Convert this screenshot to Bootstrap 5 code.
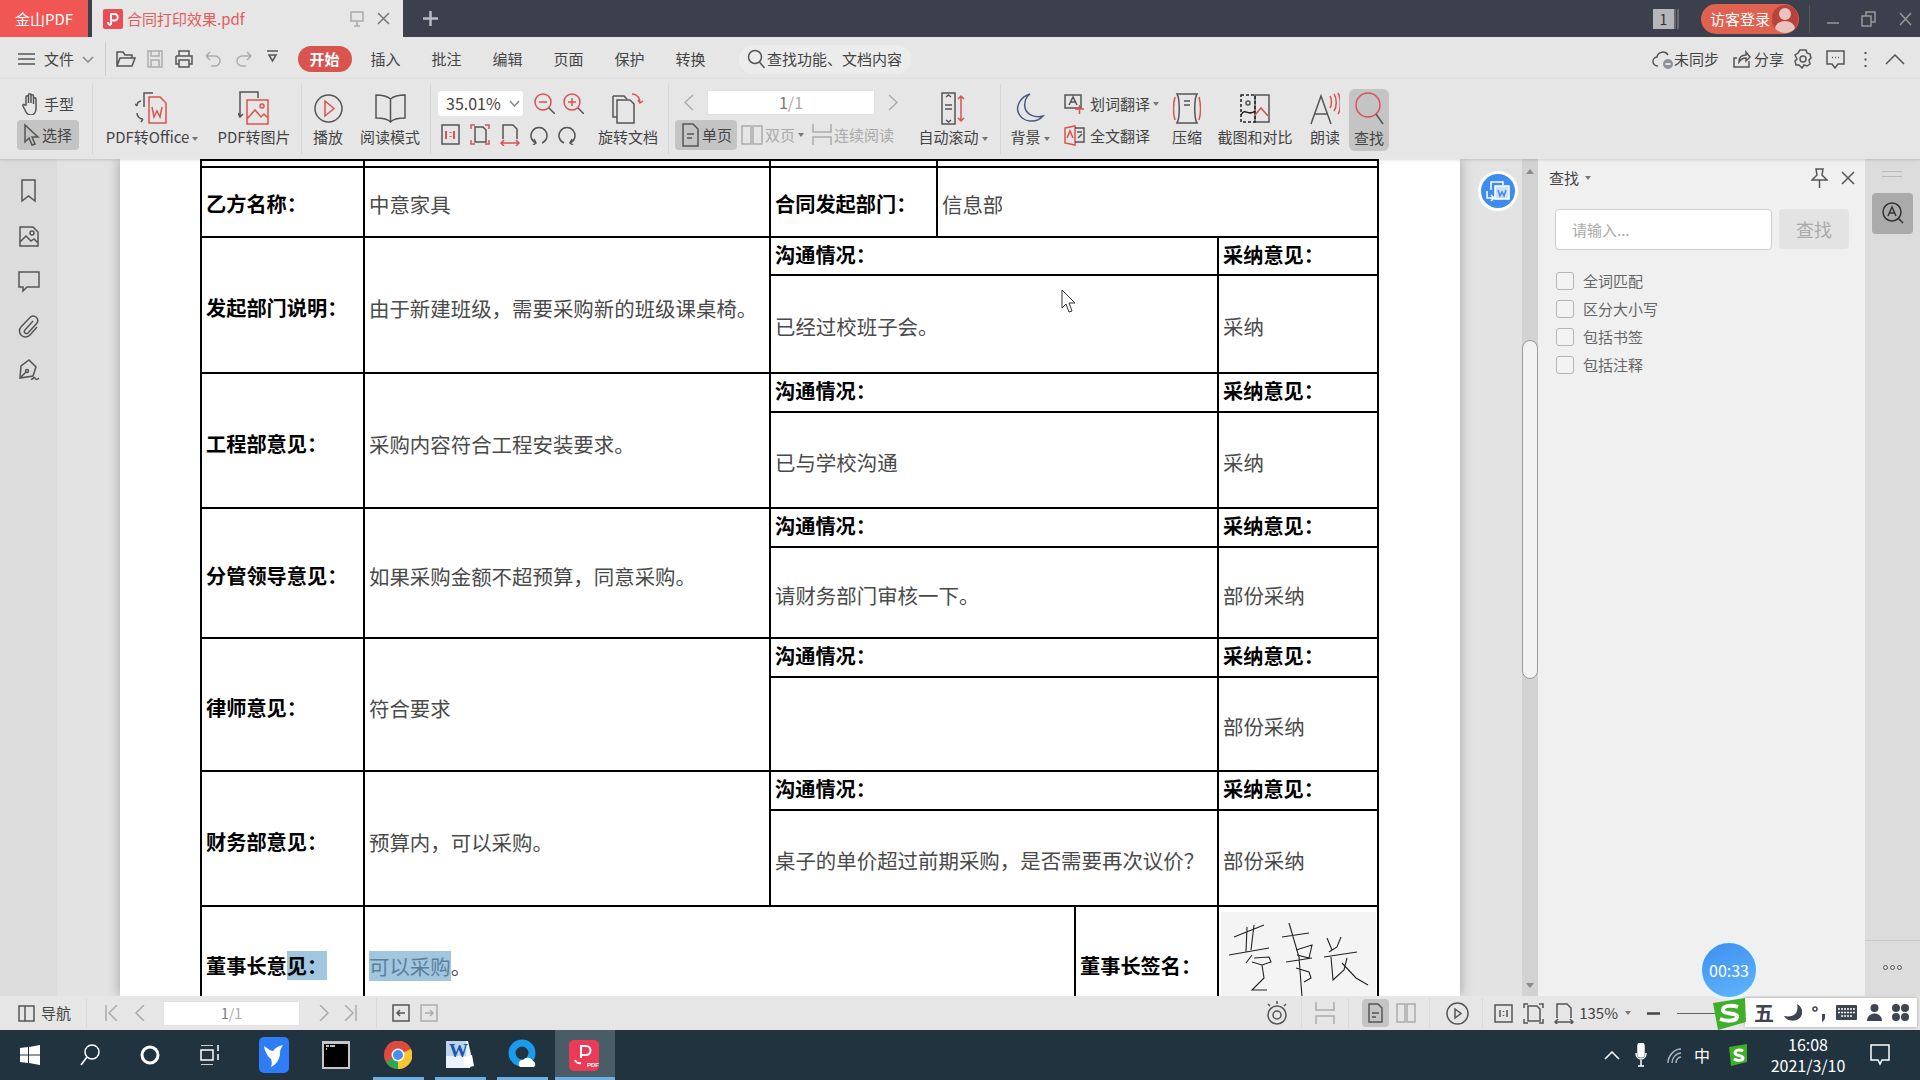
<!DOCTYPE html>
<html lang="zh">

<head>
    <meta charset="utf-8">
    <title>合同打印效果.pdf</title>
    <link rel="stylesheet" href="https://cdn.jsdelivr.net/npm/bootstrap@5.3.0/dist/css/bootstrap.min.css">
    <style>
        html, body { height: 100%; }
        body { width: 1920px; height: 1080px; overflow: hidden; font: 15px/20px "Noto Sans CJK SC", "Liberation Sans", sans-serif; color: #444; background: #e6e6e6; }
        svg { display: block; flex: none; fill: none; stroke: #555; stroke-width: 1.5; }
        .red { stroke: #d9534f; }
        .dim { opacity: .4; }
        .muted-txt { color: #aaa; }

        /* title bar */
        .title-bar { height: 37px; background: #3c3f4c; }
        .brand-tab { width: 88px; background: #f05654; color: #fff; line-height: 37px; text-align: center; }
        .file-tab { width: 311px; margin-left: 4px; background: #e6e6e6; color: #e25b58; padding-left: 11px; }
        .login-pill { width: 98px; height: 30px; background: #e0614f; border-radius: 15px; color: #fff; padding-left: 9px; }
        .avatar { width: 26px; height: 28px; border-radius: 14px; background: #b9423a; overflow: hidden; margin-left: auto; margin-right: 1px; }
        .count-box { width: 21px; height: 20px; background: #b4b6ba; color: #333; font-size: 14px; text-align: center; }

        /* menu row */
        .menu-row { height: 43px; padding-top: 3px; }
        .menu-sep { width: 1px; height: 34px; background: #cfcfcf; }
        .qat { width: 29.4px; display: flex; justify-content: center; }
        .menu-tab { width: 61px; text-align: center; line-height: 26px; }
        .menu-tab.on { color: #fff; font-weight: 700; background: #d9534f; border-radius: 13px; width: 54px; margin: 0 3.5px; }
        .search-pill { width: 172px; height: 29px; margin-left: 18px; padding-left: 8px; background: #ececec; border-radius: 14px; white-space: nowrap; }

        /* ribbon */
        .ribbon { height: 80px; position: relative; z-index: 2; box-shadow: 0 1px 3px rgba(0,0,0,.15); }
        .rib-sep { width: 1px; height: 70px; margin-top: 5px; background: #d6d6d6; flex: none; }
        .tool { height: 80px; padding-top: 12px; display: flex; flex-direction: column; align-items: center; flex: none; white-space: nowrap; }
        .tool-ico { height: 35px; display: flex; align-items: center; justify-content: center; margin-bottom: 1px; }
        .caret-s { display: inline-block; width: 0; height: 0; border: 3px solid transparent; border-top: 4px solid #777; border-bottom: 0; margin-left: 3px; vertical-align: middle; }
        .mini { height: 30px; display: flex; align-items: center; white-space: nowrap; }
        .mini.on { background: #c4c4c4; border-radius: 4px; }
        .tool-on { background: #c4c4c4; border-radius: 6px; height: 62px; margin-top: 10px; padding-top: 2px; }
        .w-g1 { width: 92px; padding: 10px 0 0 17px; }
        .t118 { width: 118px; } .t86 { width: 86px; } .t52 { width: 52px; } .t72 { width: 72px; }
        .t76 { width: 76px; } .t94 { width: 94px; } .t58 { width: 58px; } .t38 { width: 38px; }
        .t98 { width: 98px; } .t42 { width: 42px; } .t40 { width: 40px; margin-left: 3px; }
        .zoom-col { width: 152px; margin-left: 7px; padding-top: 12px; flex: none; }
        .zoom-box { width: 85px; height: 25px; background: #fff; border-radius: 3px; padding: 0 3px 0 8px; font-size: 16px; }
        .nav-col { width: 237px; padding-top: 11px; flex: none; }
        .page-box { width: 168px; height: 25px; background: #fff; border: 1px solid #e0e0e0; text-align: center; line-height: 23px; color: #777; font-size: 16px; }
        .trans-col { width: 109px; padding: 10px 0 0 5px; flex: none; }

        /* main area */
        .main-area { flex: 1 1 auto; min-height: 0; position: relative; overflow: hidden; }
        .side-rail { width: 57px; background: #dcdcdc; padding-top: 20px; gap: 21px; flex: none; }
        .gutter-l { width: 63px; background: #e3e3e3; flex: none; }
        .gutter-r { width: 62px; background: #e3e3e3; flex: none; }
        .doc-page { width: 1340px; background: #fff; overflow: hidden; flex: none; box-shadow: 0 0 12px rgba(0,0,0,.3); padding-left: 80px; position: relative; }
        .doc-table { width: 1177px; table-layout: fixed; border-collapse: collapse; font-size: 20.45px; color: #4a4a4a; }
        .doc-table td { border: 2px solid #000; padding: 5px 0 0 4px; line-height: 24px; overflow: hidden; }
        .doc-table .lbl { font-weight: 700; color: #000; font-size: 20.2px; }
        .doc-table .tall { padding-top: 7px; }
        .doc-table .sub { padding: 0 0 2px 4px; }
        .doc-table .flat { padding: 0 0 0 4px; }
        .h7 { height: 7px; } .h70 { height: 70px; } .h38 { height: 38px; } .h39 { height: 39px; }
        .h91 { height: 91px; } .h94 { height: 94px; } .h96 { height: 96px; } .h98 { height: 98px; } .h120 { height: 120px; }
        .sel { background: #a0c6e0; }
        .sel-txt { background: #a0c6e0; color: #5f7f99; }
        .doc-table .sign-cell { padding: 5px 0 0 2px; }
        .sign-img { background: #f3f4f3; height: 113px; width: 155px; }
        .mouse { position: absolute; left: 941px; top: 130px; }

        .blue-fab { position: absolute; left: 1478px; top: 12px; width: 40px; height: 40px; border-radius: 50%; background: #3f8bef; border: 3px solid #fff; display: flex; align-items: center; justify-content: center; }
        .scroll-track { width: 16px; background: #d2d2d2; flex: none; position: relative; }
        .scroll-thumb { position: absolute; left: 0; top: 181px; width: 16px; height: 339px; background: #f2f2f2; border: 1px solid #9a9a9a; border-radius: 8px; }
        .arrow-up { position: absolute; top: 10px; left: 4px; border: 4px solid transparent; border-bottom: 5px solid #8a8a8a; border-top: 0; }
        .arrow-dn { position: absolute; bottom: 8px; left: 4px; border: 4px solid transparent; border-top: 5px solid #8a8a8a; border-bottom: 0; }
        .find-panel { width: 327px; background: #f0f0f0; flex: none; padding: 9px 10px 0 11px; }
        .find-input { width: 217px; height: 41px; border: 1px solid #cfcfcf; border-radius: 4px; background: #fff; color: #aaa; padding-left: 16px; line-height: 39px; }
        .find-btn { width: 70px; height: 40px; border-radius: 4px; background: #e3e3e3; color: #aaa; text-align: center; line-height: 40px; font-size: 18px; margin-left: 7px; }
        .find-opt { height: 28px; color: #666; }
        .check-box { width: 18px; height: 18px; border: 1px solid #b5b5b5; border-radius: 3px; margin-right: 9px; background: #f3f3f3; }
        .strip-r { width: 55px; background: #dcdcdc; flex: none; position: relative; }
        .strip-handle { width: 20px; height: 6px; border-top: 1px solid #bbb; border-bottom: 1px solid #bbb; margin: 12px 0 0 17px; }
        .strip-btn { width: 41px; height: 41px; margin: 16px 0 0 7px; background: #aaa; border-radius: 4px; display: flex; align-items: center; justify-content: center; }
        .strip-more { position: absolute; left: 0; right: 0; top: 781px; border-top: 1px solid #c8c8c8; padding-top: 24px; display: flex; gap: 2px; justify-content: center; }
        .strip-more i { width: 5px; height: 5px; border: 1px solid #555; border-radius: 50%; }

        /* status bar */
        .status-bar { height: 35px; position: relative; z-index: 2; }
        .st-sep { width: 1px; height: 30px; background: #d8d8d8; flex: none; }
        .st-page { width: 137px; height: 25px; background: #fff; border: 1px solid #e2e2e2; text-align: center; line-height: 23px; color: #777; font-size: 14px; }
        .st-on { width: 27px; height: 28px; background: #c4c4c4; border-radius: 4px; display: flex; align-items: center; justify-content: center; }

        /* overlays */
        .timer { position: absolute; left: 1699px; top: 940px; width: 60px; height: 60px; border-radius: 50%; background: linear-gradient(160deg, #3f8ff0, #5fb6fb); border: 3px solid #e8f3fb; color: #fff; font-size: 16px; text-align: center; line-height: 54px; z-index: 5; }
        .ime-bar { position: absolute; left: 1745px; top: 998px; width: 172px; height: 29px; background: #fff; box-shadow: 0 0 3px rgba(0,0,0,.3); z-index: 4; padding-left: 9px; gap: 10px; color: #3f4452; }
        .ime-wu { font-size: 20px; font-weight: 700; line-height: 29px; }
        .ime-s { position: absolute; left: 1713px; top: 998px; z-index: 6; }

        /* taskbar */
        .task-bar { height: 50px; background: #21333f; position: relative; z-index: 3; color: #fff; }
        .task-ico { width: 60px; height: 50px; display: flex; align-items: center; justify-content: center; flex: none; }
        .app-row { position: absolute; top: 0; display: flex; }
        .app-ico { height: 50px; display: flex; align-items: center; justify-content: center; flex: none; position: relative; padding-right: 2px; }
        .app-w { width: 51px; margin-right: 11px; }
        .app-w::after { content: ""; position: absolute; left: 0; right: 0; bottom: 0; height: 3px; background: #6cb1e6; }
        .app-on { width: 60px; margin-left: -4px; background: #4a5d66; }
        .app-on::after { content: ""; position: absolute; left: 0; right: 0; bottom: 0; height: 3px; background: #6cb1e6; }
        .clock { width: 92px; text-align: center; font-size: 16px; line-height: 21px; }
        .no-line { stroke: none; }
        .white-line { stroke: #fff; }
    </style>
</head>

<body class="d-flex flex-column">
    <!-- title bar -->
    <div class="title-bar d-flex align-items-stretch flex-none">
        <div class="brand-tab">金山PDF</div>
        <div class="file-tab d-flex align-items-center">
            <svg class="no-line" width="20" height="20" viewBox="0 0 20 20"><rect width="20" height="20" rx="2" fill="#ea4d55"/><path d="M8 16V5h3.500a3 3 0 0 1 0 6.500H8M5 13a3 3 0 0 0 3 3" fill="none" stroke="#fff" stroke-width="1.800"/></svg>
            <span class="ms-1">合同打印效果.pdf</span>
            <svg class="ms-auto" width="14" height="18" viewBox="0 0 14 18"><rect x="1" y="2" width="12" height="9" style="stroke:#aaa"/><path d="M7 11v5M4 16h6" style="stroke:#aaa"/></svg>
            <svg style="margin:0 13px" width="13" height="13" viewBox="0 0 13 13"><path d="M1 1l11 11M12 1L1 12" style="stroke:#777"/></svg>
        </div>
        <div class="d-flex align-items-center" style="margin-left:20px">
            <svg width="15" height="15" viewBox="0 0 15 15"><path d="M7.500 0v15M0 7.500h15" style="stroke:#b9bbc2;stroke-width:2.500"/></svg>
        </div>
        <div class="ms-auto d-flex align-items-center">
            <div class="count-box">1</div>
            <svg style="margin-right:22px" width="5" height="20" viewBox="0 0 5 20"><path d="M1 0v20M4 0v20" style="stroke:#777"/></svg>
            <div class="login-pill d-flex align-items-center">访客登录
                <div class="avatar">
                    <svg class="no-line" width="26" height="28" viewBox="0 0 26 28"><circle cx="13" cy="9" r="6" fill="#e9c4be"/><ellipse cx="13" cy="24" rx="10" ry="8" fill="#e9c4be"/></svg>
                </div>
            </div>
            <div style="width:1px;height:28px;background:#555;margin:0 17px 0 10px"></div>
            <svg width="12" height="12" viewBox="0 0 12 12"><path d="M0 10h12" style="stroke:#999"/></svg>
            <svg style="margin:0 23px 0 22px" width="15" height="16" viewBox="0 0 15 16"><rect x="1" y="5" width="9" height="10" style="stroke:#999"/><path d="M5 5V1h9v10h-4" style="stroke:#999"/></svg>
            <svg style="margin-right:8px" width="13" height="14" viewBox="0 0 13 14"><path d="M1 1l11 12M12 1L1 13" style="stroke:#999"/></svg>
        </div>
    </div>

    <!-- menu row -->
    <div class="menu-row d-flex align-items-center">
        <svg style="margin-left:18px" width="17" height="12" viewBox="0 0 17 12"><path d="M0 1h17M0 6h17M0 11h17"/></svg>
        <span style="margin-left:9px">文件</span>
        <svg style="margin:0 11px 0 8px" width="12" height="7" viewBox="0 0 12 7"><path d="M1 1l5 5 5-5" style="stroke:#888"/></svg>
        <div class="menu-sep"></div>
        <div class="d-flex" style="margin-left:5px;width:183px">
            <div class="qat"><svg width="20" height="18" viewBox="0 0 20 18"><path d="M1 16V2h6l2 3h7v3M1 16l3-8h15l-3 8z"/></svg></div>
            <div class="qat"><svg class="dim" width="18" height="18" viewBox="0 0 18 18"><path d="M2 1h14v16H2zM5 1v5h8V1M5 10h8v7H5z"/></svg></div>
            <div class="qat"><svg width="18" height="18" viewBox="0 0 18 18"><path d="M4 6V1h10v5M1 6h16v8h-3M4 14H1V6M4 10h10v7H4z"/></svg></div>
            <div class="qat"><svg class="dim" width="17" height="17" viewBox="0 0 17 17"><path d="M1 6l4-4M1 6l4 4M1 6h9a5 5 0 0 1 0 10H6"/></svg></div>
            <div class="qat"><svg class="dim" width="17" height="17" viewBox="0 0 17 17"><path d="M16 6l-4-4M16 6l-4 4M16 6H7a5 5 0 0 0 0 10h4"/></svg></div>
            <div class="qat"><svg width="11" height="13" viewBox="0 0 11 13"><path d="M0 1h11M2 5l3.500 6L9 5z"/></svg></div>
        </div>
        <div class="menu-tab on">开始</div>
        <div class="menu-tab">插入</div>
        <div class="menu-tab">批注</div>
        <div class="menu-tab">编辑</div>
        <div class="menu-tab">页面</div>
        <div class="menu-tab">保护</div>
        <div class="menu-tab">转换</div>
        <div class="search-pill d-flex align-items-center">
            <svg width="18" height="20" viewBox="0 0 18 20"><circle cx="8" cy="8" r="6.500"/><path d="M12.500 13l5 6"/></svg>
            <span style="margin-left:2px">查找功能、文档内容</span>
        </div>
        <div class="ms-auto d-flex align-items-center" style="padding-right:15px">
            <svg width="22" height="22" viewBox="0 0 22 22"><path d="M6 18a4.500 4.500 0 0 1-1-9 6 6 0 0 1 11-2"/><circle cx="16" cy="16" r="5" style="fill:#8d939c;stroke:none"/><path d="M13.500 16h5" style="stroke:#fff"/></svg>
            <span>未同步</span>
            <svg style="margin:0 3px 0 14px" width="18" height="18" viewBox="0 0 18 18"><path d="M4 8H1v9h15v-6M6 12c0-5 3-7 7-7V2l4 5-4 4V8c-3 0-5 1-7 4z"/></svg>
            <span>分享</span>
            <svg style="margin:0 14px 0 10px" width="18" height="20" viewBox="0 0 18 20"><path d="M6 1h6l1 3 3 1 1 4-2 2 1 4-3 2-3-1-2 3-3-3-3 0-1-4 2-2-2-4 3-2z"/><circle cx="9" cy="10" r="3"/></svg>
            <svg style="margin-right:18px" width="19" height="19" viewBox="0 0 19 19"><path d="M1 1h17v13h-6l-3 4-3-4H1z"/><path d="M6 7.500h1M9 7.500h1M12 7.500h1"/></svg>
            <svg style="margin-right:17px" width="5" height="17" viewBox="0 0 5 17"><path d="M2.500 1v2M2.500 7.500v2M2.500 14v2" style="stroke-width:2"/></svg>
            <svg width="20" height="11" viewBox="0 0 20 11"><path d="M1 10l9-9 9 9"/></svg>
        </div>
    </div>

    <!-- ribbon -->
    <div class="ribbon d-flex">
        <div class="w-g1 flex-none">
            <div class="mini" style="padding-left:5px">
                <svg width="18" height="22" viewBox="0 0 18 22"><path d="M4 12V4a1.200 1.200 0 0 1 2.500 0v6-8a1.200 1.200 0 0 1 2.500 0v8-7a1.200 1.200 0 0 1 2.500 0v8-5a1.200 1.200 0 0 1 2.500 0v10c0 3-2 6-5 6s-4-1-5-3l-3-6c-.5-1.500 1-2 2-1z"/></svg>
                <span class="ms-1">手型</span>
            </div>
            <div class="mini on" style="width:62px;padding-left:6px;margin-top:1px">
                <svg width="17" height="24" viewBox="0 0 17 24"><path d="M2 2v17l4-4 3 7 3-1-3-7h6z"/></svg>
                <span style="margin-left:2px">选择</span>
            </div>
        </div>
        <div class="rib-sep"></div>
        <div class="tool t118">
            <div class="tool-ico"><svg width="34" height="34" viewBox="0 0 34 34"><path d="M9 16V2h9M2 22a6 6 0 0 0 6 6M6 10a5 5 0 0 0-4 5M2 15l-2-2M8 28l-2 3"/><path class="red" d="M14 6h11l6 6v20H14zM17 16l2 10 3-6 3 6 2-10"/></svg></div>
            <div>PDF转Office<span class="caret-s"></span></div>
        </div>
        <div class="tool t86">
            <div class="tool-ico"><svg width="32" height="34" viewBox="0 0 32 34"><path d="M2 26V1h18v6M0 22l2 4 3-3"/><path class="red" d="M9 9h21v24H9zM9 28l8-9 6 7 3-3 4 4"/><circle class="red" cx="24" cy="15" r="2"/></svg></div>
            <div>PDF转图片</div>
        </div>
        <div class="rib-sep" style="margin-left:4px"></div>
        <div class="tool t52">
            <div class="tool-ico"><svg width="29" height="29" viewBox="0 0 29 29"><circle cx="14.500" cy="14.500" r="13.500"/><path class="red" d="M11 7l9 7.500-9 7.500z"/></svg></div>
            <div>播放</div>
        </div>
        <div class="tool t72">
            <div class="tool-ico"><svg width="31" height="29" viewBox="0 0 31 29"><path d="M15.500 5C12 2 6 1 1 1v23c5 0 11 0 14.500 4 3.500-4 9.500-4 14.500-4V1c-5 0-11 1-14.500 4zM15.500 5v23"/></svg></div>
            <div>阅读模式</div>
        </div>
        <div class="rib-sep" style="margin-left:4px"></div>
        <div class="zoom-col">
            <div class="d-flex align-items-center">
                <div class="zoom-box d-flex align-items-center justify-content-between">35.01%
                    <svg width="11" height="7" viewBox="0 0 11 7"><path d="M1 1l4.500 5L10 1" style="stroke:#888"/></svg>
                </div>
                <svg style="margin-left:11px" width="21" height="21" viewBox="0 0 21 21"><circle class="red" cx="9" cy="9" r="8"/><path class="red" d="M5 9h8"/><path d="M15 15l6 6"/></svg>
                <svg style="margin-left:8px" width="21" height="21" viewBox="0 0 21 21"><circle class="red" cx="9" cy="9" r="8"/><path class="red" d="M5 9h8M9 5v8"/><path d="M15 15l6 6"/></svg>
            </div>
            <div class="d-flex align-items-center" style="gap:10px;margin-top:8px;padding-left:3px">
                <svg width="19" height="21" viewBox="0 0 19 21"><rect x="1" y="1" width="17" height="19"/><path class="red" d="M5 7v8M9.500 8v1M9.500 12v1M13 7v8" style="stroke-width:2"/></svg>
                <svg width="20" height="21" viewBox="0 0 20 21"><path d="M5 3h8l3 3v12H5z"/><path class="red" d="M1 5V1h4M15 1h4v4M1 16v4h4M15 20h4v-4"/></svg>
                <svg width="20" height="22" viewBox="0 0 20 22"><path d="M3 15V1h10l4 4v10"/><path class="red" d="M1 19h18M4 16l-3 3 3 3M16 16l3 3-3 3"/></svg>
                <svg width="18" height="21" viewBox="0 0 18 21"><path d="M6 19a8 8 0 1 1 6 0M4 15l2 4-3 2"/></svg>
                <svg width="18" height="21" viewBox="0 0 18 21"><path d="M12 19a8 8 0 1 0-6 0M14 15l-2 4 3 2"/></svg>
            </div>
        </div>
        <div class="tool t76">
            <div class="tool-ico"><svg width="32" height="32" viewBox="0 0 32 32"><path d="M5 8h13l4 4v19H5z"/><path d="M1 4h11l3 3M1 4v21h4"/><path class="red" d="M20 2a8 8 0 0 1 8 9M26 8l2 3 3-2"/></svg></div>
            <div>旋转文档</div>
        </div>
        <div class="rib-sep" style="margin-left:2px"></div>
        <div class="nav-col">
            <div class="d-flex align-items-center" style="padding-left:15px">
                <svg class="dim" width="10" height="17" viewBox="0 0 10 17"><path d="M9 1L1 8.500 9 16"/></svg>
                <div class="page-box" style="margin:0 13px"><span>1</span><span class="muted-txt">/1</span></div>
                <svg class="dim" width="10" height="17" viewBox="0 0 10 17"><path d="M1 1l8 7.500L1 16"/></svg>
            </div>
            <div class="d-flex align-items-center" style="margin-top:5px;padding-left:6px">
                <div class="mini on" style="width:62px;padding-left:7px">
                    <svg width="17" height="24" viewBox="0 0 17 24"><path d="M1 1h10l5 5v17H1zM5 11h7M5 15h5"/></svg>
                    <span style="margin-left:3px">单页</span>
                </div>
                <div class="mini muted-txt ms-1">
                    <svg class="dim" width="22" height="20" viewBox="0 0 22 20"><path d="M1 1h9v18H1zM12 1h9v18h-9z"/></svg>
                    <span style="margin-left:2px">双页</span><span class="caret-s"></span>
                </div>
                <div class="mini muted-txt" style="margin-left:8px">
                    <svg class="dim" width="20" height="21" viewBox="0 0 20 21"><path d="M1 0v8h18V0M1 21v-8h18v8"/></svg>
                    <span style="margin-left:2px">连续阅读</span>
                </div>
            </div>
        </div>
        <div class="tool t94">
            <div class="tool-ico"><svg width="24" height="33" viewBox="0 0 24 33"><rect x="1" y="1" width="13" height="31"/><path d="M5 5l2.500-2L10 5M4 13h7M4 17h7M5 28l2.500 2 2.500-2"/><path class="red" d="M20 4v25M17 7l3-3 3 3M17 26l3 3 3-3"/></svg></div>
            <div>自动滚动<span class="caret-s"></span></div>
        </div>
        <div class="rib-sep"></div>
        <div class="tool t58">
            <div class="tool-ico"><svg width="30" height="30" viewBox="0 0 30 30"><path d="M15 1C5 4 0 14 4 21c4 8 17 10 24 2-8 2-16-1-18-8C9 9 11 4 15 1z" style="stroke:#4a5a80"/></svg></div>
            <div>背景<span class="caret-s"></span></div>
        </div>
        <div class="trans-col">
            <div class="mini">
                <svg width="21" height="20" viewBox="0 0 21 20"><path d="M1 1h16v13H1zM5 11l4-8 4 8M6.500 8h5"/><path class="red" d="M11 15h9M15.500 11v9"/></svg>
                <span style="margin-left:5px">划词翻译</span><span class="caret-s"></span>
            </div>
            <div class="mini" style="margin-top:2px">
                <svg width="21" height="21" viewBox="0 0 21 21"><path class="red" d="M1 3l10-2v19L1 18zM3 13l3-7 3 7"/><path d="M11 3h9v14h-9M13 7h5M14 13l4-4"/></svg>
                <span style="margin-left:5px">全文翻译</span>
            </div>
        </div>
        <div class="tool t38">
            <div class="tool-ico"><svg width="28" height="31" viewBox="0 0 28 31"><path d="M4 1h20c-3 5-3 24 0 29H4c3-5 3-24 0-29zM11 8h6M11 12h6"/><path class="red" d="M2 4c-2 8-2 16 0 23M26 4c2 8 2 16 0 23"/></svg></div>
            <div>压缩</div>
        </div>
        <div class="tool t98">
            <div class="tool-ico"><svg width="30" height="29" viewBox="0 0 30 29"><path d="M15 1h14v27H15z"/><path d="M1 1h14v27H1z" stroke-dasharray="3 2" style="stroke:#222"/><path class="red" d="M15 21l6-7 7 8"/><circle cx="8" cy="9" r="2"/><path d="M1 21c4-8 8 2 14-4" style="stroke:#222"/></svg></div>
            <div>截图和对比</div>
        </div>
        <div class="tool t42">
            <div class="tool-ico"><svg width="30" height="33" viewBox="0 0 30 33"><path d="M1 32L11 4l10 28M5 22h12"/><path class="red" d="M20 4c2 3 2 9 0 12M24 2c3 4 3 13 0 17M28 1c3 5 3 17 0 21"/></svg></div>
            <div>朗读</div>
        </div>
        <div class="tool t40 tool-on">
            <div class="tool-ico"><svg width="30" height="34" viewBox="0 0 30 34"><circle class="red" cx="14" cy="14" r="12"/><path d="M22 23l7 10"/></svg></div>
            <div style="margin-top:1px">查找</div>
        </div>
    </div>

    <!-- document and panels -->
    <div class="main-area d-flex">
        <div class="side-rail d-flex flex-column align-items-center">
            <svg width="15" height="24" viewBox="0 0 15 24"><path d="M1 1h13v21l-6.500-5L1 22z"/></svg>
            <svg width="20" height="24" viewBox="0 0 20 24"><path d="M1 3h13l5 5v14H1zM1 18l6-6 5 5 3-2 4 4"/><circle cx="13" cy="9" r="2"/></svg>
            <svg width="22" height="24" viewBox="0 0 22 24"><path d="M1 3h20v15H9l-4 4v-4H1z"/></svg>
            <svg width="22" height="24" viewBox="0 0 22 24"><path d="M15 7L7 16a2 2 0 0 0 3 3l9-10a4.500 4.500 0 0 0-6.500-6L3 13a6 6 0 0 0 9 8l7-8"/></svg>
            <svg width="22" height="24" viewBox="0 0 22 24"><path d="M11 1l7 7-3 9-13 2 1-12zM2 19l6-6M13 20c2 1 3-3 4-1s2 2 4 0"/><circle cx="9" cy="12" r="1.500"/></svg>
        </div>
        <div class="gutter-l"></div>
        <div class="doc-page">
            <table class="doc-table">
                <colgroup><col style="width:163px"><col style="width:406px"><col style="width:167px"><col style="width:138px"><col style="width:143px"><col style="width:160px"></colgroup>
                <tr class="h7"><td class="flat"></td><td class="flat"></td><td class="flat"></td><td class="flat" colspan="3"></td></tr>
                <tr class="h70">
                    <td class="lbl">乙方名称：</td><td>中意家具</td><td class="lbl">合同发起部门：</td><td colspan="3">信息部</td>
                </tr>
                <tr class="h38">
                    <td class="lbl tall" rowspan="2">发起部门说明：</td><td class="tall" rowspan="2">由于新建班级，需要采购新的班级课桌椅。</td>
                    <td class="lbl sub" colspan="3">沟通情况：</td><td class="lbl sub">采纳意见：</td>
                </tr>
                <tr class="h98"><td colspan="3">已经过校班子会。</td><td>采纳</td></tr>
                <tr class="h39">
                    <td class="lbl tall" rowspan="2">工程部意见：</td><td class="tall" rowspan="2">采购内容符合工程安装要求。</td>
                    <td class="lbl sub" colspan="3">沟通情况：</td><td class="lbl sub">采纳意见：</td>
                </tr>
                <tr class="h96"><td colspan="3">已与学校沟通</td><td>采纳</td></tr>
                <tr class="h39">
                    <td class="lbl tall" rowspan="2">分管领导意见：</td><td class="tall" rowspan="2">如果采购金额不超预算，同意采购。</td>
                    <td class="lbl sub" colspan="3">沟通情况：</td><td class="lbl sub">采纳意见：</td>
                </tr>
                <tr class="h91"><td colspan="3">请财务部门审核一下。</td><td>部份采纳</td></tr>
                <tr class="h39">
                    <td class="lbl tall" rowspan="2">律师意见：</td><td class="tall" rowspan="2">符合要求</td>
                    <td class="lbl sub" colspan="3">沟通情况：</td><td class="lbl sub">采纳意见：</td>
                </tr>
                <tr class="h94"><td colspan="3"></td><td>部份采纳</td></tr>
                <tr class="h39">
                    <td class="lbl tall" rowspan="2">财务部意见：</td><td class="tall" rowspan="2">预算内，可以采购。</td>
                    <td class="lbl sub" colspan="3">沟通情况：</td><td class="lbl sub">采纳意见：</td>
                </tr>
                <tr class="h96"><td colspan="3">桌子的单价超过前期采购，是否需要再次议价？</td><td>部份采纳</td></tr>
                <tr class="h120">
                    <td class="lbl flat">董事长意<span class="sel">见：</span></td>
                    <td class="flat" colspan="3"><span class="sel-txt">可以采购</span>。</td>
                    <td class="lbl flat">董事长签名：</td>
                    <td class="sign-cell">
                        <div class="sign-img">
                            <svg width="155" height="113" viewBox="0 0 155 113" style="stroke:#222;stroke-width:1.100">
                                <path d="M13 25L43 13M8 43l40-7M26 15l-1 25M33 13l-3 25M25 51l6-8M33 46l15-1 2 5-9 3-10-3M41 53l2 13-12 12h15"/>
                                <path d="M68 11l10 34 3 40M61 25l27-4M75 38l16-5-3 13-12-3M65 50l26-4M75 56l13 4 2 6-7 4"/>
                                <path d="M120 25l-4 10-8 5M106 26l5 12M103 45l33-5M110 45l2 23 11-10 3-12M121 51l14 15 12 7"/>
                            </svg>
                        </div>
                    </td>
                </tr>
            </table>
            <svg class="mouse" width="14" height="24" viewBox="0 0 14 24" style="stroke:#333;stroke-width:1"><path d="M1 1v18l4-4 3 8 3-1-3-8h6z" style="fill:#fff"/></svg>
        </div>
        <div class="gutter-r"></div>
        <div class="blue-fab">
            <svg class="white-line" width="24" height="22" viewBox="0 0 24 22"><path d="M5 10V2h12v3"/><path d="M9 6h14v13H9z" style="fill:#cfe0fb"/><path d="M1 11v7h6M5 15l3 3-3 3"/><path d="M12 10l2 6 2-4 2 4 2-6" style="stroke:#3f8bef"/></svg>
        </div>
        <div class="scroll-track"><span class="arrow-up"></span><div class="scroll-thumb"></div><span class="arrow-dn"></span></div>
        <div class="find-panel">
            <div class="d-flex align-items-center" style="height:20px">
                <span style="margin-right:3px">查找</span><span class="caret-s"></span>
                <svg class="ms-auto" width="17" height="20" viewBox="0 0 17 20"><path d="M5 1h7l-1 6 5 5H1l5-5zM8.500 12v8"/></svg>
                <svg style="margin:0 0 0 13px" width="14" height="14" viewBox="0 0 14 14"><path d="M1 1l12 12M13 1L1 13"/></svg>
            </div>
            <div class="d-flex" style="margin:21px 0 0 6px">
                <div class="find-input">请输入...</div>
                <div class="find-btn">查找</div>
            </div>
            <div style="margin:17px 0 0 7px">
                <div class="find-opt d-flex align-items-center"><span class="check-box"></span>全词匹配</div>
                <div class="find-opt d-flex align-items-center"><span class="check-box"></span>区分大小写</div>
                <div class="find-opt d-flex align-items-center"><span class="check-box"></span>包括书签</div>
                <div class="find-opt d-flex align-items-center"><span class="check-box"></span>包括注释</div>
            </div>
        </div>
        <div class="strip-r">
            <div class="strip-handle"></div>
            <div class="strip-btn"><svg width="22" height="22" viewBox="0 0 22 22" style="stroke:#333"><circle cx="10" cy="10" r="9"/><path d="M6 14l4-9 4 9M7.500 11h5M16 16l5 5"/></svg></div>
            <div class="strip-more"><i></i><i></i><i></i></div>
        </div>
    </div>

    <!-- status bar -->
    <div class="status-bar d-flex align-items-center">
        <svg style="margin-left:18px" width="17" height="17" viewBox="0 0 17 17"><path d="M1 1h15v15H1zM7 1v15"/></svg>
        <span style="margin:0 15px 0 6px">导航</span>
        <div class="st-sep"></div>
        <svg class="dim" style="margin-left:18px" width="13" height="16" viewBox="0 0 13 16"><path d="M1 0v16M12 0L4 8l8 8"/></svg>
        <svg class="dim" style="margin-left:15px" width="12" height="16" viewBox="0 0 12 16"><path d="M11 0L3 8l8 8"/></svg>
        <div class="st-page" style="margin-left:18px"><span>1</span><span class="muted-txt">/1</span></div>
        <svg class="dim" style="margin-left:19px" width="10" height="16" viewBox="0 0 10 16"><path d="M1 0l8 8-8 8"/></svg>
        <svg class="dim" style="margin:0 19px 0 15px" width="13" height="16" viewBox="0 0 13 16"><path d="M1 0l8 8-8 8M12 0v16"/></svg>
        <div class="st-sep"></div>
        <svg style="margin-left:15px" width="18" height="18" viewBox="0 0 18 18"><path d="M1 1h16v16H1zM13 9H5M8 6L5 9l3 3"/></svg>
        <svg class="dim" style="margin-left:10px" width="18" height="18" viewBox="0 0 18 18"><path d="M1 1h16v16H1zM5 9h8M10 6l3 3-3 3"/></svg>
        <div class="ms-auto d-flex align-items-center" style="padding-right:200px">
            <svg width="22" height="24" viewBox="0 0 22 24"><circle cx="11" cy="14" r="9"/><circle cx="11" cy="14" r="4"/><path d="M11 0v3M2 3l2 2M20 3l-2 2"/></svg>
            <div class="st-sep" style="margin:0 13px"></div>
            <svg class="dim" width="20" height="22" viewBox="0 0 20 22"><path d="M1 0v8h18V0M1 22v-8h18v8"/></svg>
            <div class="st-sep" style="margin:0 13px"></div>
            <div class="st-on"><svg width="15" height="20" viewBox="0 0 15 20"><path d="M1 1h9l4 4v14H1zM4 10h7M4 14h4"/></svg></div>
            <svg class="dim" style="margin:0 13px 0 7px" width="20" height="20" viewBox="0 0 20 20"><path d="M1 1h8v18H1zM11 1h8v18h-8z"/></svg>
            <div class="st-sep"></div>
            <svg style="margin:0 13px 0 16px" width="23" height="23" viewBox="0 0 23 23"><circle cx="11.500" cy="11.500" r="10.500"/><path d="M9 7l6 4.500L9 16z"/></svg>
            <div class="st-sep"></div>
            <svg style="margin-left:11px" width="19" height="19" viewBox="0 0 19 19"><path d="M1 1h17v17H1zM6 6v7M13 6v7M9.500 7v1M9.500 11v1"/></svg>
            <svg style="margin-left:10px" width="21" height="21" viewBox="0 0 21 21"><path d="M5 3h9l3 3v12H5zM1 5V1h4M16 1h4v4M1 16v4h4M16 20h4v-4"/></svg>
            <svg style="margin-left:10px" width="20" height="21" viewBox="0 0 20 21"><path d="M3 15V1h10l4 4v10M1 19h18M4 16l-3 3 3 3M16 16l3 3-3 3"/></svg>
            <span style="margin-left:5px">135%</span><span class="caret-s" style="margin-left:7px"></span>
            <svg style="margin-left:16px" width="13" height="3" viewBox="0 0 13 3"><path d="M0 1.500h13" style="stroke:#444;stroke-width:2.500"/></svg>
            <div style="width:43px;height:1px;background:#666;margin-left:17px"></div>
        </div>
    </div>

    <!-- taskbar -->
    <div class="task-bar d-flex align-items-center">
        <div class="task-ico"><svg class="no-line" width="20" height="20" viewBox="0 0 20 20"><path d="M0 3l8-1v7.500H0zM9 2l11-2v9.500H9zM0 10.500h8V18l-8-1zM9 10.500h11V20L9 18z" fill="#fff"/></svg></div>
        <div class="task-ico"><svg class="white-line" width="20" height="22" viewBox="0 0 20 22"><circle cx="12" cy="8" r="7"/><path d="M7 13l-6 8"/></svg></div>
        <div class="task-ico"><svg class="white-line" width="20" height="20" viewBox="0 0 20 20" style="stroke-width:3"><circle cx="10" cy="10" r="8"/></svg></div>
        <div class="task-ico"><svg class="white-line" width="20" height="20" viewBox="0 0 20 20"><path d="M1 0h12M1 5h12v10H1zM1 20h12M18 0v6M18 9v6"/></svg></div>
        <div class="app-row" style="left:246px">
            <div class="app-ico" style="width:57px"><svg class="no-line" width="30" height="36" viewBox="0 0 30 36"><rect width="30" height="36" rx="5" fill="#2f7df6"/><path d="M5 9c4 3 7 5 9 5 2-3 5-5 10-6-2 3-3 5-3 8 0 6-4 12-9 14 1-3 1-6 0-8-3-2-6-7-7-13z" fill="#fff"/></svg></div>
            <div class="app-ico" style="width:67px"><svg class="no-line" width="28" height="28" viewBox="0 0 28 28"><rect width="28" height="28" fill="#c6c6c6"/><rect x="2" y="3" width="24" height="23" fill="#000"/><path d="M4 5h3M8 5h5M4 8h1" stroke="#fff"/></svg></div>
        </div>
        <div class="app-row" style="left:373px">
            <div class="app-ico app-w"><svg class="no-line" width="28" height="28" viewBox="0 0 28 28"><circle cx="14" cy="14" r="14" fill="#dd4b3e"/><path d="M14 14L2 21A14 14 0 0 0 14 28z" fill="#2ea84f"/><path d="M14 14v14A14 14 0 0 0 27 8z" fill="#f7c52f"/><path d="M3 5l6 11L14 8h13A14 14 0 0 0 3 5z" fill="#dd4b3e"/><circle cx="14" cy="14" r="6.500" fill="#fff"/><circle cx="14" cy="14" r="5" fill="#4a8cf0"/></svg></div>
            <div class="app-ico app-w"><svg class="no-line" width="28" height="30" viewBox="0 0 28 30"><path d="M0 1h22l4 18-2 9H0z" fill="#eaf2fb"/><rect width="20" height="15" y="1" fill="#bcd4ee"/><text x="3" y="17" font-size="19" font-weight="700" font-family="Liberation Serif, serif" fill="#1d56a8">W</text><path d="M16 18l10-3 2 11-9 2z" fill="#fff"/></svg></div>
            <div class="app-ico app-w"><svg class="no-line" width="30" height="32" viewBox="0 0 30 32"><circle cx="15" cy="14" r="10" fill="none" stroke="#1a9bf0" stroke-width="7"/><path d="M13 28a4 4 0 0 1 3-7 6 6 0 0 1 10 1 3.500 3.500 0 0 1 1 6z" fill="#fff"/></svg></div>
            <div class="app-ico app-on"><svg class="no-line" width="30" height="31" viewBox="0 0 30 31"><rect width="30" height="31" rx="5" fill="#ea3a56"/><path d="M12 18V6h5a4.500 4.500 0 0 1 0 9h-5M6 20a5 5 0 0 0 6 3" fill="none" stroke="#fff" stroke-width="2"/><text x="18" y="27" font-size="6" font-weight="700" font-family="Liberation Sans, sans-serif" fill="#fff">PDF</text></svg></div>
        </div>
        <div class="ms-auto d-flex align-items-center" style="padding-right:30px">
            <svg class="white-line" width="16" height="9" viewBox="0 0 16 9"><path d="M1 8l7-7 7 7"/></svg>
            <svg class="white-line" style="margin-left:15px" width="12" height="24" viewBox="0 0 12 24"><rect x="3" width="6" height="14" rx="3" fill="#fff"/><path d="M1 10c0 8 10 8 10 0M6 17v6M3 23h6"/></svg>
            <svg style="margin-left:20px" width="15" height="15" viewBox="0 0 15 15"><path d="M1 15C1 8 7 1 14 1M5 15c0-5 4-10 9-10M9 15c0-3 2-6 5-6" stroke="#aab4bb" style="stroke:#aab4bb"/></svg>
            <span style="margin-left:12px;font-size:16px">中</span>
            <svg class="no-line" style="margin-left:18px" width="20" height="22" viewBox="0 0 20 22"><path d="M1 3l18-3v18L3 22z" fill="#3fae29"/><path d="M15 7c-3-2-8-1-8 2s8 2 8 5-6 3-9 1" fill="none" stroke="#fff" stroke-width="3"/></svg>
            <div class="clock" style="margin-left:14px"><div>16:08</div><div>2021/3/10</div></div>
            <svg class="white-line" style="margin-left:16px" width="20" height="22" viewBox="0 0 20 22"><path d="M1 1h18v15h-7l-2 4-2-4H1z"/></svg>
        </div>
    </div>

    <!-- floating overlays -->
    <div class="ime-bar d-flex align-items-center">
        <span class="ime-wu">五</span>
        <svg class="no-line" width="18" height="18" viewBox="0 0 18 18"><path d="M13 0c2 8-2 14-13 12 3 6 16 7 18-2 1-4-1-8-5-10z" fill="#3f4452"/></svg>
        <svg class="no-line" width="14" height="18" viewBox="0 0 14 18"><circle cx="3" cy="5" r="2" fill="none" stroke="#3f4452"/><path d="M10 10h3v3c0 2-1 4-3 5z" fill="#3f4452"/></svg>
        <svg class="no-line" width="21" height="15" viewBox="0 0 21 15"><rect width="21" height="15" rx="1" fill="#3f4452"/><path d="M2 4h17M2 7.500h17M5 11h11" stroke="#fff" stroke-dasharray="2 1"/></svg>
        <svg class="no-line" width="15" height="17" viewBox="0 0 15 17"><circle cx="7.500" cy="4" r="4" fill="#3f4452"/><path d="M0 17c0-10 15-10 15 0z" fill="#3f4452"/></svg>
        <svg class="no-line" width="17" height="17" viewBox="0 0 17 17"><circle cx="4" cy="4" r="4" fill="#3f4452"/><circle cx="13" cy="4" r="4" fill="#3f4452"/><circle cx="4" cy="13" r="4" fill="#3f4452"/><circle cx="13" cy="13" r="4" fill="#3f4452"/></svg>
    </div>
    <svg class="ime-s no-line" width="34" height="32" viewBox="0 0 34 32"><path d="M0 5l32-5 1 24-28 8z" fill="#3fae29"/><path d="M25 9c-5-2-15-2-15 3s15 2 14 7-12 4-17 2" fill="none" stroke="#fff" stroke-width="4"/></svg>
    <div class="timer">00:33</div>
</body>

</html>
